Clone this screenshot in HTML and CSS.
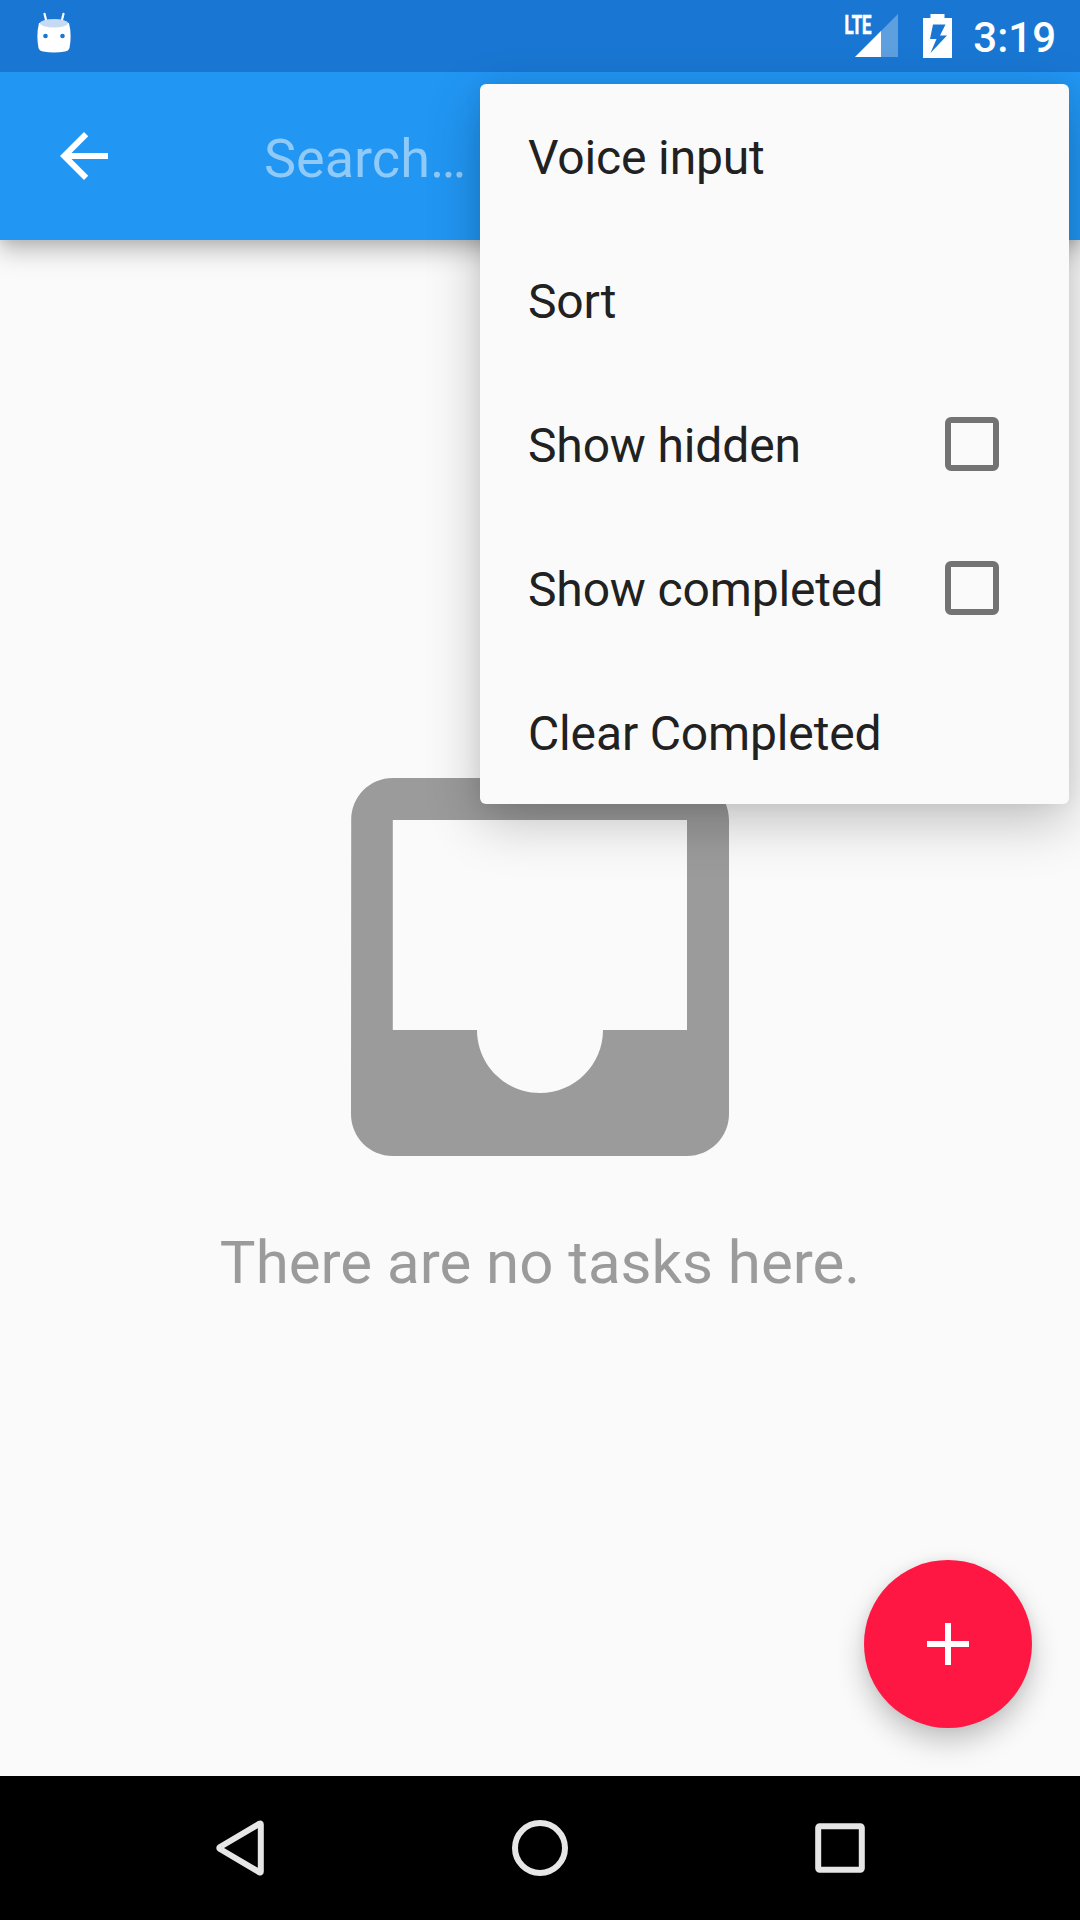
FILE: index.html
```html
<!DOCTYPE html>
<html lang="en">
<head>
<meta charset="utf-8">
<title>Tasks</title>
<link rel="stylesheet" href="styles.css">
</head>
<body>
<div class="screen">
  <header class="status-bar">
    <svg class="marshmallow" width="36" height="42" viewBox="0 0 36 42">
      <path d="M8.500 2.800l2 8M27.500 2.800l-2 8" stroke="#fff" stroke-width="2.200" stroke-linecap="round"/>
      <path d="M3 12Q18 8 33 12Q36 24 33.500 37Q32.500 40 29 40.500Q18 42.500 7 40.500Q3.500 40 2.500 37Q0 24 3 12z" fill="#fff"/>
      <ellipse cx="18" cy="12.300" rx="14" ry="4.200" fill="#c6dbf3"/>
      <circle cx="9.500" cy="25" r="2.300" fill="#1976d2"/>
      <circle cx="26.500" cy="25" r="2.300" fill="#1976d2"/>
    </svg>
    <div class="status-icons">
      <svg class="signal" width="55" height="44" viewBox="0 0 55 44">
        <path d="M12 43L55 0V43z" fill="#fff" fill-opacity=".3"/>
        <path d="M12 43L38 17V43z" fill="#fff"/>
        <text class="lte" x="1.500" y="19.500" textLength="27" lengthAdjust="spacingAndGlyphs">LTE</text>
      </svg>
      <svg class="battery" width="29" height="44" viewBox="0 0 29 44">
        <path fill="#fff" fill-rule="evenodd" d="M7.500 0H21.500V4H29V44H0V4H7.500zM10 10.500L7 25H13.500L7.500 39L24 21.500H17L22.500 10.500z"/>
      </svg>
      <span class="clock">3:19</span>
    </div>
  </header>
  <div class="app-bar">
    <svg class="back" width="72" height="72" viewBox="0 0 24 24"><path fill="#fff" d="M20 11H7.830l5.590-5.590L12 4l-8 8 8 8 1.410-1.410L7.830 13H20v-2z"/></svg>
    <span class="search">Search…</span>
  </div>
  <main class="empty">
    <svg class="inbox" width="504" height="504" viewBox="0 0 24 24"><path fill="#9b9b9b" d="M19 3H4.990c-1.110 0-1.980.89-1.980 2L3 19c0 1.100.88 2 1.990 2H19c1.100 0 2-.9 2-2V5c0-1.110-.9-2-2-2zm0 12h-4c0 1.660-1.350 3-3 3s-3-1.340-3-3H4.990V5H19v10z"/></svg>
    <p class="message">There are no tasks here.</p>
  </main>
  <nav class="nav-bar">
    <svg width="60" height="60" viewBox="0 0 60 60"><path d="M50.800 6.200V53.800Q50.800 55 49.500 54.300L10 31Q8.500 30 10 29L49.500 5.700Q50.800 5 50.800 6.200z" stroke-linejoin="round"/></svg>
    <svg width="60" height="60" viewBox="0 0 60 60"><circle cx="30" cy="30" r="25"/></svg>
    <svg width="60" height="60" viewBox="0 0 60 60"><rect x="8.200" y="8.200" width="43.600" height="43.600" rx="1.500"/></svg>
  </nav>
  <div class="fab">
    <svg width="72" height="72" viewBox="0 0 24 24"><path fill="#fff" d="M19 13h-6v6h-2v-6H5v-2h6V5h2v6h6v2z"/></svg>
  </div>
  <div class="menu">
    <div class="item">Voice input</div>
    <div class="item">Sort</div>
    <div class="item">Show hidden<span class="checkbox"></span></div>
    <div class="item">Show completed<span class="checkbox"></span></div>
    <div class="item">Clear Completed</div>
  </div>
</div>
</body>
</html>
```
FILE: styles.css
```css
* { box-sizing: border-box; }
body { margin: 0; font-family: Roboto, "Noto Sans", sans-serif; }
svg { display: block; flex: none; }
.screen {
  position: relative;
  width: 1080px;
  height: 1920px;
  display: flex;
  flex-direction: column;
  overflow: hidden;
  background: #fafafa;
}
.status-bar {
  height: 72px;
  flex: none;
  display: flex;
  justify-content: space-between;
  padding: 0 24px 0 36px;
  background: #1976d2;
  color: #fff;
}
.marshmallow { margin-top: 11px; }
.status-icons { display: flex; }
.signal { margin: 14px 25px 0 0; overflow: visible; }
.lte {
  font-size: 26px;
  font-weight: 700;
  fill: #fff;
  stroke: #fff;
  stroke-width: .7px;
}
.battery { margin: 14px 21px 0 0; }
.clock {
  font-size: 42px;
  font-weight: 500;
  line-height: 50px;
  padding-top: 13px;
}
.app-bar {
  height: 168px;
  flex: none;
  display: flex;
  align-items: center;
  padding-left: 48px;
  background: #2196f3;
  box-shadow: 0 12px 22px rgba(0, 0, 0, .22), 0 2px 12px rgba(0, 0, 0, .12);
  clip-path: inset(0 0 -50px 0);
}
.search {
  margin-left: 144px;
  padding-top: 6px;
  font-size: 54px;
  line-height: 64px;
  color: #90caf9;
}
.empty {
  flex: 1;
  display: flex;
  flex-direction: column;
  align-items: center;
  padding-top: 475px;
}
.message {
  margin: 9px 0 0;
  font-size: 60px;
  line-height: 70px;
  color: #9b9b9b;
  white-space: nowrap;
}
.nav-bar {
  height: 144px;
  flex: none;
  display: flex;
  justify-content: center;
  align-items: center;
  gap: 240px;
  background: #000;
}
.nav-bar svg { fill: none; stroke: #e6e6e6; stroke-width: 6; }
.fab {
  position: absolute;
  right: 48px;
  bottom: 192px;
  width: 168px;
  height: 168px;
  display: flex;
  align-items: center;
  justify-content: center;
  border-radius: 50%;
  background: #ff1744;
  box-shadow: 0 14px 28px rgba(0, 0, 0, .22), 0 0 12px rgba(0, 0, 0, .06);
}
.menu {
  position: absolute;
  top: 84px;
  right: 11px;
  width: 589px;
  border-radius: 6px;
  background: #fafafa;
  box-shadow: 0 18px 54px rgba(0, 0, 0, .23), 0 0 18px rgba(0, 0, 0, .06);
}
.item {
  height: 144px;
  display: flex;
  align-items: center;
  justify-content: space-between;
  padding: 3px 70px 0 48px;
  font-size: 48px;
  letter-spacing: -.15px;
  color: #212121;
}
.checkbox {
  width: 54px;
  height: 54px;
  margin-top: -3px;
  border: 6px solid #737373;
  border-radius: 6px;
}
```
